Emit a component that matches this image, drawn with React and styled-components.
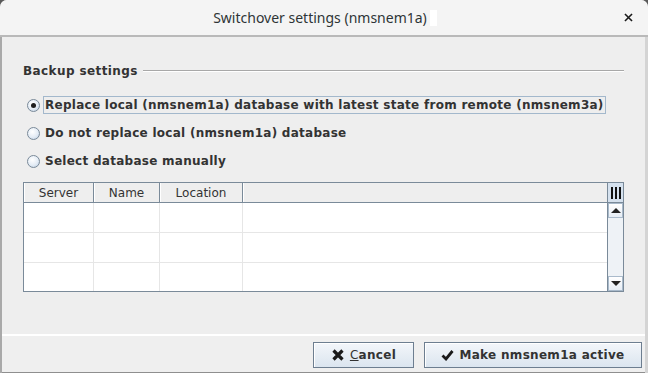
import styled, { createGlobalStyle } from 'styled-components';

const GlobalStyle = createGlobalStyle`
  html, body {
    margin: 0;
    padding: 0;
    background: #5a5a5a;
  }
  body {
    font-family: "DejaVu Sans", "Liberation Sans", sans-serif;
  }
`;

const Window = styled.div`
  width: 648px;
  height: 373px;
  display: flex;
  flex-direction: column;
  background: #d4d4d4;
  border-radius: 7px 7px 0 0;
  overflow: hidden;
`;

const TitleBar = styled.div`
  flex: none;
  height: 37px;
  box-sizing: border-box;
  display: grid;
  grid-template-columns: 60px 1fr 60px;
  align-items: center;
  background: #f4f4f4;
  border-bottom: 2px solid #b9b9b9;
`;

const Title = styled.div`
  justify-self: center;
  display: flex;
  align-items: center;
  gap: 3px;
  font-family: "Noto Sans", "DejaVu Sans", sans-serif;
  font-size: 14px;
  color: #2e3436;
  padding-left: 2px;
`;

const TitleMark = styled.span`
  width: 7px;
  height: 16px;
  background: #ffffff;
`;

const CloseButton = styled.div`
  justify-self: end;
  margin-right: 14px;
  display: flex;
  align-items: center;
`;

const Body = styled.div`
  flex: 1;
  display: flex;
  flex-direction: column;
  width: 645px;
  border-left: 2px solid #a9a9a9;
  box-sizing: border-box;
  background: #eeeeee;
`;

const Content = styled.div`
  flex: 1;
  display: flex;
  flex-direction: column;
  padding: 26px 21px 0 21px;
  border-bottom: 2px solid #ffffff;
`;

const GroupHeader = styled.div`
  display: flex;
  align-items: center;
  gap: 5px;
  height: 16px;
`;

const GroupTitle = styled.span`
  font-size: 12px;
  font-weight: bold;
  color: #333333;
  letter-spacing: 0.4px;
`;

const GroupLine = styled.span`
  flex: 1;
  height: 1px;
  background: #a8a8a8;
  border-bottom: 1px solid #ffffff;
`;

const RadioList = styled.div`
  display: flex;
  flex-direction: column;
  gap: 8px;
  margin-top: 16px;
  padding-left: 4px;
`;

const RadioRow = styled.div`
  display: flex;
  align-items: center;
  height: 20px;
  gap: 3px;
`;

const RadioCircle = styled.span`
  width: 11px;
  height: 11px;
  border-radius: 50%;
  border: 1px solid #7a8a99;
  background: radial-gradient(circle at 40% 35%, #ffffff 0%, #e4ecf5 55%, #b8cbe0 100%);
  display: flex;
  align-items: center;
  justify-content: center;
  flex: none;
`;

const RadioDot = styled.span`
  width: 5px;
  height: 5px;
  border-radius: 50%;
  background: #1e1e1e;
`;

const RadioLabel = styled.span`
  font-size: 12px;
  font-weight: bold;
  color: #333333;
  padding: 1px 1px;
  border: 1px solid ${p => (p.$focused ? '#a3b8cc' : 'transparent')};
  letter-spacing: 0.27px;
`;

const TableFrame = styled.div`
  margin-top: 11px;
  width: 601px;
  height: 110px;
  box-sizing: border-box;
  border: 1px solid #7a8a99;
  display: grid;
  grid-template-columns: 1fr 16px;
  grid-template-rows: 20px 1fr;
  background: #ffffff;
`;

const HeaderRow = styled.div`
  display: grid;
  grid-template-columns: 70px 66px 83px 1fr;
  background: #eeeeee;
  border-bottom: 1px solid #7a8a99;
`;

const HeaderCell = styled.div`
  font-size: 12px;
  color: #333333;
  display: flex;
  align-items: center;
  justify-content: center;
  border-right: ${p => (p.$last ? 'none' : '1px solid #7a8a99')};
  box-shadow: inset 1px 0 0 #ffffff;
`;

const Rows = styled.div`
  display: grid;
  grid-template-rows: 30px 30px 1fr;
`;

const Row = styled.div`
  display: grid;
  grid-template-columns: 70px 66px 83px 1fr;
  border-bottom: ${p => (p.$last ? 'none' : '1px solid #e6e6e6')};
`;

const Cell = styled.div`
  border-right: ${p => (p.$last ? 'none' : '1px solid #e6e6e6')};
`;

const CornerButton = styled.div`
  display: flex;
  align-items: center;
  justify-content: center;
  gap: 2px;
  background: #d5e1ee;
  border-left: 1px solid #7a8a99;
  border-bottom: 1px solid #7a8a99;
`;

const Bar = styled.span`
  width: 2px;
  height: 12px;
  background: #111111;
`;

const ScrollBar = styled.div`
  display: flex;
  flex-direction: column;
  background: #eef1f5;
  border-left: 1px solid #7a8a99;
`;

const ScrollButton = styled.div`
  height: 15px;
  flex: none;
  display: flex;
  align-items: center;
  justify-content: center;
  background: linear-gradient(#ffffff, #e6edf5);
  border: 1px solid #a9bacb;
  box-sizing: border-box;
`;

const Track = styled.div`
  flex: 1;
  background: #eef2f6;
`;

const Arrow = styled.span`
  width: 0;
  height: 0;
  border-left: 5px solid transparent;
  border-right: 5px solid transparent;
  ${p => (p.$down ? 'border-top: 5px solid #222222;' : 'border-bottom: 5px solid #222222;')}
`;

const ButtonBar = styled.div`
  flex: none;
  height: 37px;
  box-sizing: border-box;
  display: flex;
  justify-content: flex-end;
  align-items: flex-start;
  gap: 10px;
  padding: 6px 3px 0 0;
  background: #efefef;
  border-bottom: 1px solid #8f8f8f;
`;

const Button = styled.button`
  height: 26px;
  width: ${p => p.$width}px;
  box-sizing: border-box;
  display: flex;
  align-items: center;
  justify-content: center;
  gap: 5px;
  border: 1px solid #6d7e90;
  box-shadow: inset 1px 1px 0 #ffffff;
  background: linear-gradient(#f3f6fa, #dbe5ef);
  font-family: "DejaVu Sans", sans-serif;
  font-size: 12px;
  font-weight: bold;
  color: #333333;
  letter-spacing: 0.3px;
  padding: 0;
`;

const Mnemonic = styled.span`
  text-decoration: underline;
  font-weight: normal;
`;

const ButtonText = styled.span`
  font-weight: bold;
`;

function CrossIcon({ size = 14, weight = 3.2 }) {
  return (
    <svg width={size} height={size} viewBox="0 0 14 14">
      <path d="M2.5 2.5 L11.5 11.5 M11.5 2.5 L2.5 11.5" stroke="#1a1a1a" strokeWidth={weight} strokeLinecap="butt" />
    </svg>
  );
}

function CheckIcon() {
  return (
    <svg width="13" height="12" viewBox="0 0 13 12">
      <path d="M1.5 6.5 L5 10 L11.5 2" stroke="#1a1a1a" strokeWidth="2.8" fill="none" />
    </svg>
  );
}

const radios = [
  { label: 'Replace local (nmsnem1a) database with latest state from remote (nmsnem3a)', checked: true },
  { label: 'Do not replace local (nmsnem1a) database', checked: false },
  { label: 'Select database manually', checked: false },
];

const columns = ['Server', 'Name', 'Location', ''];

export default function App() {
  return (
    <>
      <GlobalStyle />
      <Window>
        <TitleBar>
          <span />
          <Title>
            Switchover settings (nmsnem1a)
            <TitleMark />
          </Title>
          <CloseButton>
            <CrossIcon size={11} weight={2} />
          </CloseButton>
        </TitleBar>
        <Body>
          <Content>
            <GroupHeader>
              <GroupTitle>Backup settings</GroupTitle>
              <GroupLine />
            </GroupHeader>
            <RadioList>
              {radios.map(r => (
                <RadioRow key={r.label}>
                  <RadioCircle>{r.checked && <RadioDot />}</RadioCircle>
                  <RadioLabel $focused={r.checked}>{r.label}</RadioLabel>
                </RadioRow>
              ))}
            </RadioList>
            <TableFrame>
              <HeaderRow>
                {columns.map((c, i) => (
                  <HeaderCell key={i} $last={i === columns.length - 1}>{c}</HeaderCell>
                ))}
              </HeaderRow>
              <CornerButton>
                <Bar />
                <Bar />
                <Bar />
              </CornerButton>
              <Rows>
                {[0, 1, 2].map(r => (
                  <Row key={r} $last={r === 2}>
                    {columns.map((c, i) => (
                      <Cell key={i} $last={i === columns.length - 1} />
                    ))}
                  </Row>
                ))}
              </Rows>
              <ScrollBar>
                <ScrollButton>
                  <Arrow />
                </ScrollButton>
                <Track />
                <ScrollButton>
                  <Arrow $down />
                </ScrollButton>
              </ScrollBar>
            </TableFrame>
          </Content>
          <ButtonBar>
            <Button $width={101}>
              <CrossIcon />
              <span><Mnemonic>C</Mnemonic><ButtonText>ancel</ButtonText></span>
            </Button>
            <Button $width={218}>
              <CheckIcon />
              <ButtonText>Make nmsnem1a active</ButtonText>
            </Button>
          </ButtonBar>
        </Body>
      </Window>
    </>
  );
}
